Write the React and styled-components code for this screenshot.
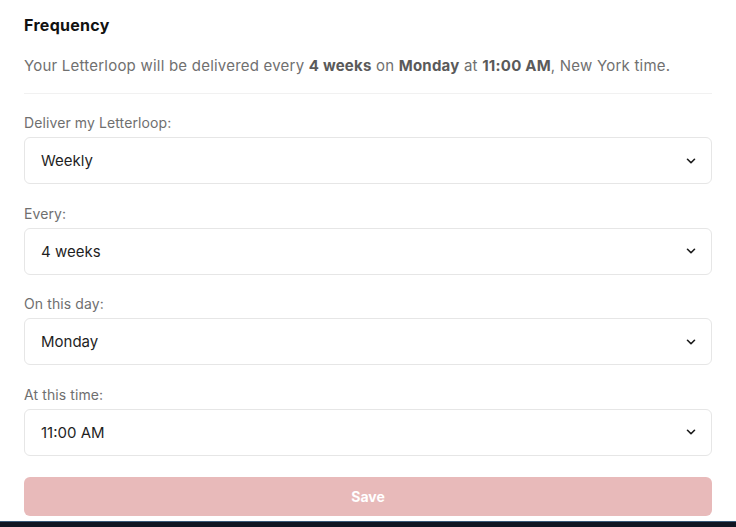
import styled, { createGlobalStyle } from "styled-components";

const GlobalStyle = createGlobalStyle`
  html, body {
    margin: 0;
    padding: 0;
    background: #ffffff;
  }
  body {
    font-family: Inter, "Noto Sans", sans-serif;
  }
`;

const Page = styled.div`
  display: flex;
  flex-direction: column;
  height: 527px;
  overflow: hidden;
`;

const Panel = styled.div`
  flex: 1;
  padding: 15px 24px 0 24px;
  display: flex;
  flex-direction: column;
`;

const Title = styled.h2`
  margin: 0;
  font-size: 16px;
  line-height: 21px;
  font-weight: 700;
  letter-spacing: 0.3px;
  color: #111111;
`;

const Summary = styled.p`
  margin: 20px 0 0 0;
  font-size: 15px;
  line-height: 20px;
  letter-spacing: 0.22px;
  color: #707070;
  padding-bottom: 17px;
  border-bottom: 1px solid #f1f1f1;
`;

const Strong = styled.b`
  font-weight: 700;
  color: #5a5a5a;
`;

const Field = styled.div`
  display: flex;
  flex-direction: column;
  gap: 4px;
  margin-top: ${(p) => (p.$first ? "19px" : "19.5px")};
`;

const Label = styled.label`
  font-size: 14px;
  line-height: 20px;
  letter-spacing: 0.1px;
  color: #6f6f6f;
`;

const Select = styled.div`
  height: 45px;
  border: 1px solid #e6e6e6;
  border-radius: 6px;
  display: flex;
  align-items: center;
  justify-content: space-between;
  padding: 0 13px 0 16px;
  font-size: 15px;
  color: #1f1f1f;
`;

const SaveButton = styled.button`
  margin-top: 21px;
  height: 39px;
  border: none;
  border-radius: 6px;
  background: #e8baba;
  color: #ffffff;
  font-family: inherit;
  font-size: 14px;
  font-weight: 700;
`;

const Footer = styled.div`
  height: 5px;
  background: #101522;
  border-top: 1px solid #3b5a7a;
`;

function Chevron() {
  return (
    <svg width="14" height="14" viewBox="0 0 24 24" fill="none" stroke="#1a1a1a" strokeWidth="2.8" strokeLinecap="round" strokeLinejoin="round">
      <path d="M6 9l6 6 6-6" />
    </svg>
  );
}

const fields = [
  { label: "Deliver my Letterloop:", value: "Weekly" },
  { label: "Every:", value: "4 weeks" },
  { label: "On this day:", value: "Monday" },
  { label: "At this time:", value: "11:00 AM" },
];

export default function App() {
  return (
    <Page>
      <GlobalStyle />
      <Panel>
        <Title>Frequency</Title>
        <Summary>
          Your Letterloop will be delivered every <Strong>4 weeks</Strong> on{" "}
          <Strong>Monday</Strong> at <Strong>11:00 AM</Strong>, New York time.
        </Summary>
        {fields.map((f, i) => (
          <Field key={f.label} $first={i === 0}>
            <Label>{f.label}</Label>
            <Select>
              <span>{f.value}</span>
              <Chevron />
            </Select>
          </Field>
        ))}
        <SaveButton>Save</SaveButton>
      </Panel>
      <Footer />
    </Page>
  );
}
